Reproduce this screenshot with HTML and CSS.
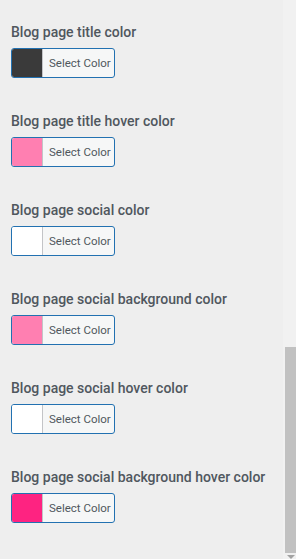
FILE: index.html
```html
<!DOCTYPE html>
<html>
<head>
<meta charset="utf-8">
<link rel="stylesheet" href="styles.css">
</head>
<body>
<div class="frame">
  <div class="panel">
    <div class="control">
      <div class="title">Blog page title color</div>
      <button class="color-btn"><span class="swatch" style="background:#3a3a3a"></span><span class="label">Select Color</span></button>
    </div>
    <div class="control">
      <div class="title">Blog page title hover color</div>
      <button class="color-btn"><span class="swatch" style="background:#ff7fb1"></span><span class="label">Select Color</span></button>
    </div>
    <div class="control">
      <div class="title">Blog page social color</div>
      <button class="color-btn"><span class="swatch" style="background:#ffffff"></span><span class="label">Select Color</span></button>
    </div>
    <div class="control">
      <div class="title">Blog page social background color</div>
      <button class="color-btn"><span class="swatch" style="background:#ff7fb1"></span><span class="label">Select Color</span></button>
    </div>
    <div class="control">
      <div class="title">Blog page social hover color</div>
      <button class="color-btn"><span class="swatch" style="background:#ffffff"></span><span class="label">Select Color</span></button>
    </div>
    <div class="control">
      <div class="title">Blog page social background hover color</div>
      <button class="color-btn"><span class="swatch" style="background:#fe2381"></span><span class="label">Select Color</span></button>
    </div>
  </div>
  <div class="scrollbar">
    <div class="thumb"></div>
    <div class="arrow"></div>
  </div>
</div>
</body>
</html>
```

FILE: styles.css
```css
html, body {
  margin: 0;
  padding: 0;
}
body {
  width: 296px;
  height: 559px;
  overflow: hidden;
  background: #eeeeee;
  font-family: Roboto, "Liberation Sans", sans-serif;
}
.frame {
  display: flex;
  height: 559px;
}
.panel {
  width: 283px;
  flex: none;
  padding: 22px 0 0 11px;
  box-sizing: border-box;
  background: #eeeeee;
}
.control {
  height: 89px;
}
.title {
  font-size: 14px;
  line-height: 20px;
  font-weight: 500;
  color: #50575e;
  white-space: nowrap;
  margin-bottom: 6px;
}
.color-btn {
  display: flex;
  align-items: stretch;
  width: 104px;
  height: 30px;
  padding: 0;
  border: 1px solid #2271b1;
  border-radius: 3px;
  background: #f6f7f7;
  overflow: hidden;
  box-sizing: border-box;
  font-family: Roboto, "Liberation Sans", sans-serif;
  cursor: pointer;
}
.swatch {
  width: 30px;
  flex: none;
  border-right: 1px solid #c3c4c7;
}
.label {
  flex: 1;
  display: flex;
  align-items: center;
  padding-left: 6px;
  font-size: 11.5px;
  color: #50575e;
}
.scrollbar {
  flex: 1;
  background: #f1f1f1;
  display: flex;
  flex-direction: column;
}
.thumb {
  margin: 347px 0 0 2px;
  height: 206px;
  background: #c1c1c1;
}
.arrow {
  margin: 2px 0 0 4px;
  width: 0;
  height: 0;
  border-left: 4px solid transparent;
  border-right: 4px solid transparent;
  border-top: 4px solid #a3a3a3;
}
```
